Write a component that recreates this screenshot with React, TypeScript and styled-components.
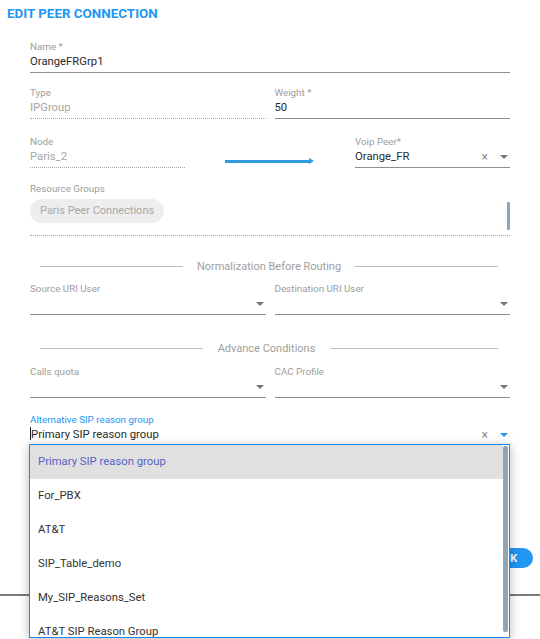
import styled, { createGlobalStyle } from "styled-components"

const GlobalStyle = createGlobalStyle`
  html, body {
    margin: 0;
    padding: 0;
    background: #fff;
    font-family: Roboto, "Noto Sans", Arial, sans-serif;
  }
`

const Page = styled.div`
  position: relative;
  width: 540px;
  height: 639px;
  overflow: hidden;
  background: #fff;
`

const Title = styled.h1`
  margin: 0;
  height: 28px;
  padding: 6px 0 0 7px;
  box-sizing: border-box;
  font-size: 13.4px;
  line-height: 16px;
  font-weight: 700;
  color: #2196f3;
  text-transform: uppercase;
`

const Form = styled.div`
  padding: 13px 30px 0 30px;
`

const Row = styled.div<{ $top: number; $single?: boolean }>`
  display: grid;
  grid-template-columns: ${(p) => (p.$single ? "1fr" : "1fr 1fr")};
  column-gap: 9px;
  margin-top: ${(p) => p.$top}px;
`

const PeerRow = styled.div<{ $top: number }>`
  display: grid;
  grid-template-columns: 155px 1fr 155px;
  align-items: start;
  margin-top: ${(p) => p.$top}px;
`

const Field = styled.div<{ $dotted?: boolean }>`
  display: flex;
  flex-direction: column;
  padding-bottom: 2px;
  border-bottom: 1px ${(p) => (p.$dotted ? "dotted #a8a8a8" : "solid #8c8c8c")};
`

const Label = styled.div<{ $active?: boolean }>`
  font-size: 9.8px;
  line-height: 12px;
  color: ${(p) => (p.$active ? "#2196f3" : "#9e9e9e")};
`

const ValueLine = styled.div`
  display: flex;
  align-items: center;
  height: 17px;
`

const Value = styled.div<{ $disabled?: boolean }>`
  flex: 1;
  font-size: 11.3px;
  line-height: 16px;
  color: ${(p) => (p.$disabled ? "#a6a6a6" : "#2b2b2b")};
  white-space: nowrap;
`

const Cursor = styled.span`
  display: inline-block;
  width: 1px;
  height: 13px;
  background: #222;
  vertical-align: -2px;
`

const Clear = styled.span`
  font-size: 12px;
  color: #8a8a8a;
  margin-right: 12px;
  line-height: 16px;
`

const Caret = styled.span<{ $active?: boolean }>`
  width: 0;
  height: 0;
  margin-right: 2px;
  border-left: 4px solid transparent;
  border-right: 4px solid transparent;
  border-top: 4px solid ${(p) => (p.$active ? "#2196f3" : "#757575")};
`

const Arrow = styled.div`
  justify-self: center;
  margin: 22px 0 0 -2px;
  display: flex;
  align-items: center;
`

const ArrowShaft = styled.div`
  width: 84px;
  height: 3px;
  background: #2f9ae0;
`

const ArrowHead = styled.div`
  width: 0;
  height: 0;
  border-top: 3.5px solid transparent;
  border-bottom: 3.5px solid transparent;
  border-left: 5px solid #2f9ae0;
`

const Groups = styled.div`
  margin-top: 15px;
  border-bottom: 1px dotted #a8a8a8;
  padding-bottom: 5px;
`

const ChipRow = styled.div`
  display: flex;
  justify-content: space-between;
  align-items: flex-start;
  margin-top: 4px;
`

const Chip = styled.div`
  background: #eeeeee;
  border-radius: 12px;
  padding: 0 10px;
  height: 24px;
  line-height: 24px;
  font-size: 11px;
  color: #a8a8a8;
`

const ScrollThumb = styled.div<{ $h: number }>`
  width: 3px;
  height: ${(p) => p.$h}px;
  margin-top: 3px;
  border-radius: 1px;
  background: #8ea3b4;
`

const Divider = styled.div<{ $top: number; $left: number; $right: number }>`
  display: grid;
  grid-template-columns: ${(p) => p.$left}px auto ${(p) => p.$right}px;
  align-items: center;
  justify-content: space-between;
  margin: ${(p) => p.$top}px 12px 0 10px;
  height: 16px;
  font-size: 11px;
  color: #9e9e9e;

  &::before,
  &::after {
    content: "";
    height: 1px;
    background: #bdbdbd;
  }
`

const DividerText = styled.span`
  grid-column: 2;
  grid-row: 1;
`

const Footer = styled.div`
  display: flex;
  justify-content: flex-end;
  margin-top: 102px;
  padding-right: 7px;
`

const OkButton = styled.button`
  width: 46px;
  height: 20px;
  border: none;
  border-radius: 10px;
  background: #2196f3;
  color: #fff;
  font-family: Roboto, Arial, sans-serif;
  font-size: 11px;
  font-weight: 700;
  padding: 0;
`

const BottomRule = styled.div`
  margin-top: 26px;
  height: 2px;
  background: #7a7a7a;
`

const Menu = styled.div`
  position: absolute;
  left: 29px;
  top: 444px;
  width: 481px;
  height: 194px;
  box-sizing: border-box;
  border: 1px solid #1e88e5;
  background: #fff;
  box-shadow: 0 2px 10px rgba(0, 0, 0, 0.28);
  display: flex;
  overflow: hidden;
`

const MenuList = styled.div`
  flex: 1;
  overflow: hidden;
`

const MenuItem = styled.div<{ $selected?: boolean }>`
  height: 34px;
  line-height: 33px;
  padding-left: 8px;
  font-size: 11.3px;
  color: ${(p) => (p.$selected ? "#5563c2" : "#333")};
  background: ${(p) => (p.$selected ? "#e0e0e0" : "#fff")};
  white-space: nowrap;
`

const MenuTrack = styled.div`
  width: 5px;
  padding: 1px 0;
  margin-right: 1px;
`

const MenuThumb = styled.div`
  height: 186px;
  border-radius: 2px;
  background: #90a4b4;
`

const options = [
  "Primary SIP reason group",
  "For_PBX",
  "AT&T",
  "SIP_Table_demo",
  "My_SIP_Reasons_Set",
  "AT&T SIP Reason Group",
]

export default function App() {
  return (
    <Page>
      <GlobalStyle />
      <Title>Edit Peer Connection</Title>
      <Form>
        <Field>
          <Label>Name *</Label>
          <ValueLine>
            <Value>OrangeFRGrp1</Value>
          </ValueLine>
        </Field>

        <Row $top={14}>
          <Field $dotted>
            <Label>Type</Label>
            <ValueLine>
              <Value $disabled>IPGroup</Value>
            </ValueLine>
          </Field>
          <Field>
            <Label>Weight *</Label>
            <ValueLine>
              <Value>50</Value>
            </ValueLine>
          </Field>
        </Row>

        <PeerRow $top={17}>
          <Field $dotted>
            <Label>Node</Label>
            <ValueLine>
              <Value $disabled>Paris_2</Value>
            </ValueLine>
          </Field>
          <Arrow>
            <ArrowShaft />
            <ArrowHead />
          </Arrow>
          <Field>
            <Label>Voip Peer*</Label>
            <ValueLine>
              <Value>Orange_FR</Value>
              <Clear>×</Clear>
              <Caret />
            </ValueLine>
          </Field>
        </PeerRow>

        <Groups>
          <Label>Resource Groups</Label>
          <ChipRow>
            <Chip>Paris Peer Connections</Chip>
            <ScrollThumb $h={28} />
          </ChipRow>
        </Groups>

        <Divider $top={22} $left={143} $right={143}>
          <DividerText>Normalization Before Routing</DividerText>
        </Divider>

        <Row $top={9}>
          <Field>
            <Label>Source URI User</Label>
            <ValueLine>
              <Value />
              <Caret />
            </ValueLine>
          </Field>
          <Field>
            <Label>Destination URI User</Label>
            <ValueLine>
              <Value />
              <Caret />
            </ValueLine>
          </Field>
        </Row>

        <Divider $top={25} $left={163} $right={168}>
          <DividerText>Advance Conditions</DividerText>
        </Divider>

        <Row $top={10}>
          <Field>
            <Label>Calls quota</Label>
            <ValueLine>
              <Value />
              <Caret />
            </ValueLine>
          </Field>
          <Field>
            <Label>CAC Profile</Label>
            <ValueLine>
              <Value />
              <Caret />
            </ValueLine>
          </Field>
        </Row>

        <Row $top={16} $single>
          <Field>
            <Label $active>Alternative SIP reason group</Label>
            <ValueLine>
              <Value>
                <Cursor />
                Primary SIP reason group
              </Value>
              <Clear>×</Clear>
              <Caret $active />
            </ValueLine>
          </Field>
        </Row>
      </Form>

      <Footer>
        <OkButton>OK</OkButton>
      </Footer>
      <BottomRule />

      <Menu>
        <MenuList>
          {options.map((o, i) => (
            <MenuItem key={o} $selected={i === 0}>
              {o}
            </MenuItem>
          ))}
        </MenuList>
        <MenuTrack>
          <MenuThumb />
        </MenuTrack>
      </Menu>
    </Page>
  )
}
